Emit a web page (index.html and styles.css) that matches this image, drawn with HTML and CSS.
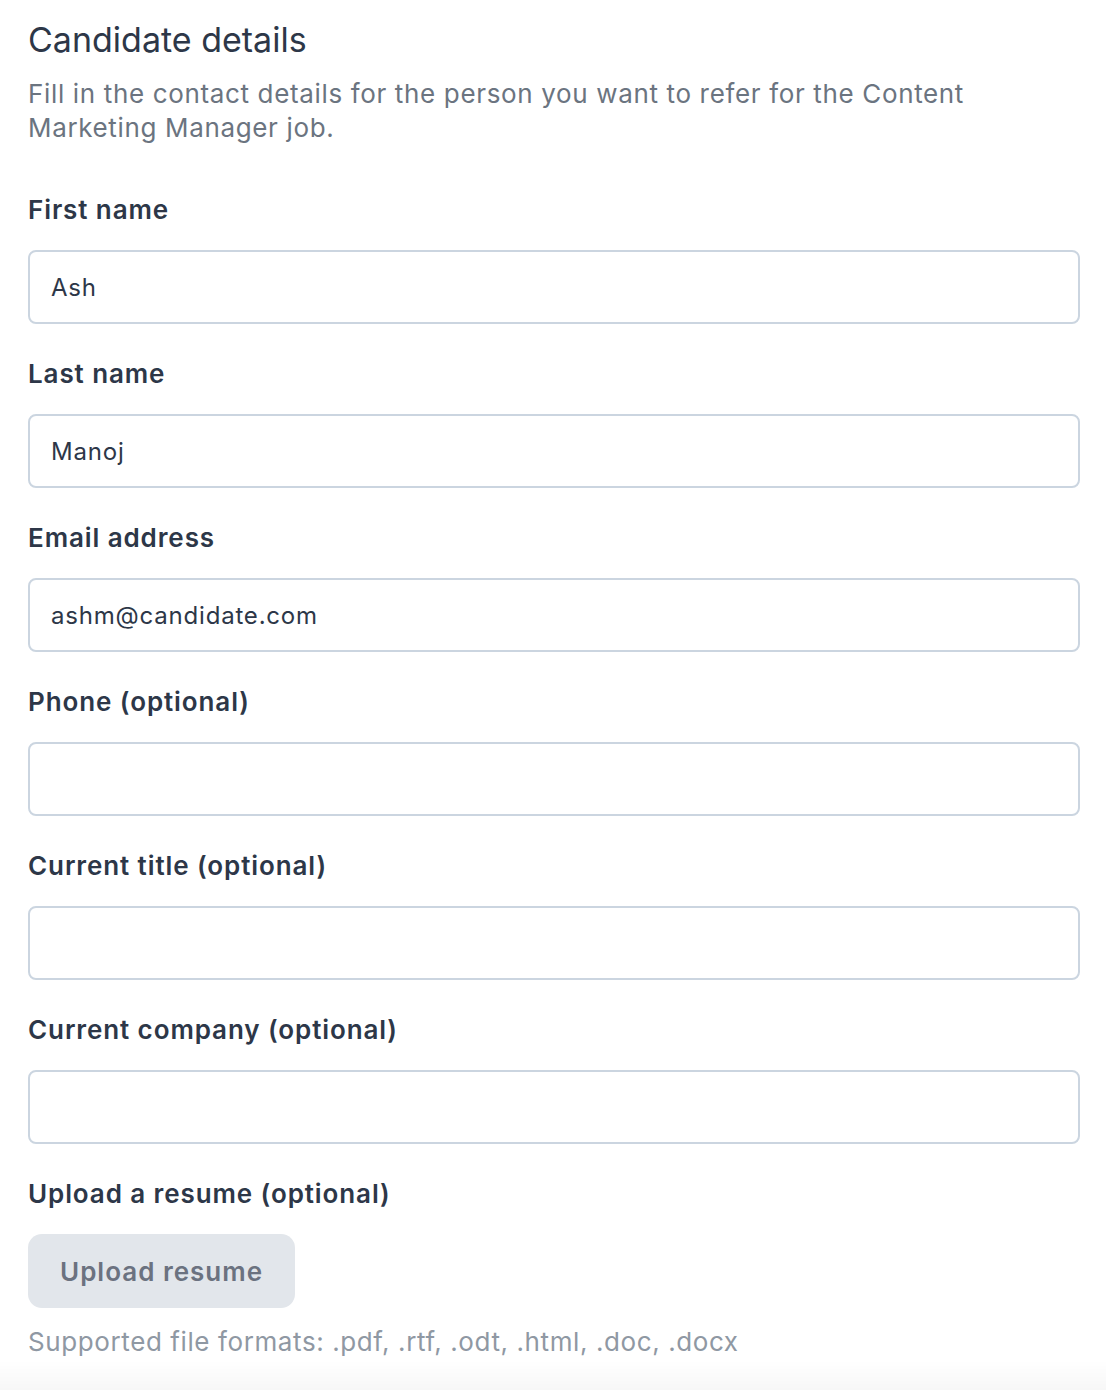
FILE: index.html
```html
<!DOCTYPE html>
<html lang="en">
<head>
    <meta charset="UTF-8">
    <meta name="viewport" content="width=device-width, initial-scale=1.0">
    <title>Candidate details</title>
    <link rel="stylesheet" href="styles.css">
</head>
<body>
    <div class="container">
        <h1>Candidate details</h1>
        <p class="descricao">
            Fill in the contact details for the person you want to refer for the Content
            Marketing Manager job.
        </p>
        <form class="formulario">
            <div class="campo">
                <label for="firstName">First name</label>
                <input type="text" id="firstName" value="Ash">
            </div>
            <div class="campo">
                <label for="lastName">Last name</label>
                <input type="text" id="lastName" value="Manoj">
            </div>
            <div class="campo">
                <label for="email">Email address</label>
                <input type="text" id="email" value="ashm@candidate.com">
            </div>
            <div class="campo">
                <label for="phone">Phone (optional)</label>
                <input type="text" id="phone">
            </div>
            <div class="campo">
                <label for="title">Current title (optional)</label>
                <input type="text" id="title">
            </div>
            <div class="campo">
                <label for="company">Current company (optional)</label>
                <input type="text" id="company">
            </div>
            <div class="campo">
                <label>Upload a resume (optional)</label>
                <button type="button" class="botao-upload">Upload resume</button>
                <p class="formatos">Supported file formats: .pdf, .rtf, .odt, .html, .doc, .docx</p>
            </div>
        </form>
    </div>
    <div class="sombra"></div>
</body>
</html>
```

FILE: styles.css
```css
/* Estilo Geral */
body {
    font-family: Inter, "Noto Sans", sans-serif;
    background-color: #fff;
    color: #2d3748;
    margin: 0;
    padding: 0;
}

.container {
    padding: 20px 26px 0 28px;
}

h1 {
    font-size: 34px;
    line-height: 40px;
    font-weight: 400;
    margin: 0 0 17px;
    color: #2d3748;
}

p.descricao {
    font-size: 26px;
    line-height: 34px;
    letter-spacing: 0.65px;
    color: #6b7480;
    margin: 0 0 47px;
}

.formulario {
    display: flex;
    flex-direction: column;
    gap: 32px;
}

.campo {
    display: flex;
    flex-direction: column;
}

label {
    font-size: 26px;
    line-height: 36px;
    font-weight: 600;
    letter-spacing: 0.9px;
    margin-bottom: 22px;
    color: #2d3748;
}

input {
    box-sizing: border-box;
    width: 100%;
    height: 74px;
    padding: 0 21px;
    border: 2px solid #cbd5e0;
    border-radius: 8px;
    font-family: inherit;
    font-size: 24px;
    letter-spacing: 0.8px;
    color: #2d3748;
    background: #fff;
}

input:focus {
    outline: none;
    border-color: #a0aec0;
}

.botao-upload {
    align-self: flex-start;
    height: 74px;
    padding: 0 32px;
    border: none;
    border-radius: 14px;
    background: #e2e6eb;
    color: #6b7280;
    font-family: inherit;
    font-size: 26px;
    font-weight: 600;
    letter-spacing: 1px;
    cursor: pointer;
}

.formatos {
    font-size: 26px;
    line-height: 34px;
    letter-spacing: 0.6px;
    color: #8f98a3;
    margin: 17px 0 0;
}

.sombra {
    position: fixed;
    left: 0;
    right: 0;
    bottom: 0;
    height: 30px;
    background: linear-gradient(to bottom, rgba(0, 0, 0, 0), rgba(0, 0, 0, 0.03));
    pointer-events: none;
}
```
